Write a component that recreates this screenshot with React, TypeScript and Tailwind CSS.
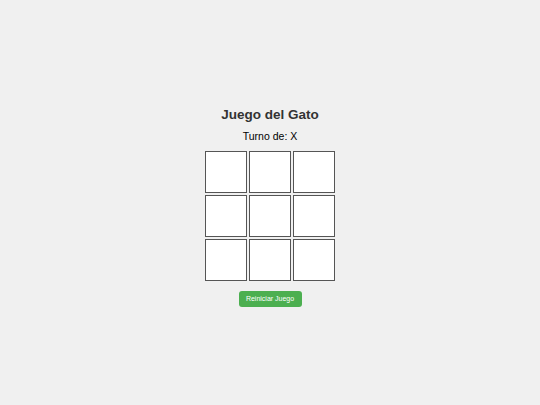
import React, { useState } from "react";

export default function App() {
  const [board, setBoard] = useState<(string | null)[]>(Array(9).fill(null));
  const [turn, setTurn] = useState<"X" | "O">("X");

  const play = (i: number) => {
    if (board[i]) return;
    const next = board.slice();
    next[i] = turn;
    setBoard(next);
    setTurn(turn === "X" ? "O" : "X");
  };

  const reset = () => {
    setBoard(Array(9).fill(null));
    setTurn("X");
  };

  return (
    <div
      className="flex h-[405px] w-full flex-col items-center justify-center bg-[#f0f0f0] pt-[8px] text-[#333]"
      style={{ fontFamily: '"Liberation Sans", Arial, sans-serif' }}
    >
      <h1 className="text-[13.5px] font-bold leading-[18px]">Juego del Gato</h1>
      <p className="mt-[6px] text-[10.5px] leading-[13px] text-black">Turno de: {turn}</p>
      <div className="mt-[8px] grid grid-cols-[repeat(3,42px)] gap-[2px]">
        {board.map((v, i) => (
          <button
            key={i}
            onClick={() => play(i)}
            className="flex h-[42px] w-[42px] items-center justify-center border border-[#555] bg-white text-[20px] font-bold"
          >
            {v}
          </button>
        ))}
      </div>
      <button
        onClick={reset}
        className="mt-[10px] h-[16px] w-[63px] rounded-[3px] bg-[#4caf50] text-[7px] leading-[16px] text-white"
      >
        Reiniciar Juego
      </button>
    </div>
  );
}
